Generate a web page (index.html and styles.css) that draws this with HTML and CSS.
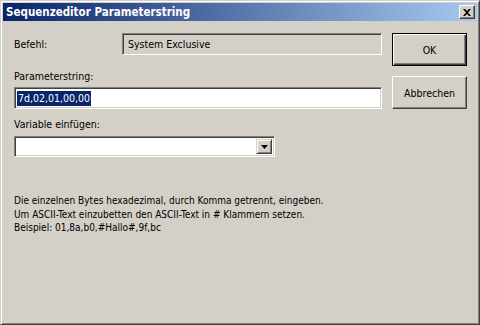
FILE: index.html
```html
<!DOCTYPE html>
<html lang="de">
<head>
    <meta charset="UTF-8">
    <title>Sequenzeditor Parameterstring</title>
    <link rel="stylesheet" href="styles.css">
</head>
<body>
    <div class="window">
        <div class="titlebar">
            <span class="title">Sequenzeditor Parameterstring</span>
            <div class="close">
                <svg width="8" height="7" viewBox="0 0 8 7">
                    <path d="M0 0h2l2 2 2-2h2L5 3.5 8 7H6L4 5 2 7H0l3-3.5z" fill="#000"/>
                </svg>
            </div>
        </div>
        <div class="main">
            <div class="form">
                <div class="row">
                    <span class="label-befehl">Befehl:</span>
                    <div class="field readonly">System Exclusive</div>
                </div>
                <div class="label label-param">Parameterstring:</div>
                <div class="field edit"><span class="selected">7d,02,01,00,00</span></div>
                <div class="label label-var">Variable einfügen:</div>
                <div class="combo">
                    <div class="combo-text"></div>
                    <div class="combo-btn">
                        <svg width="7" height="4" viewBox="0 0 7 4"><path d="M0 0h7L3.5 4z" fill="#000"/></svg>
                    </div>
                </div>
                <div class="help">
                    <div>Die einzelnen Bytes hexadezimal, durch Komma getrennt, eingeben.</div>
                    <div>Um ASCII-Text einzubetten den ASCII-Text in # Klammern setzen.</div>
                    <div>Beispiel: 01,8a,b0,#Hallo#,9f,bc</div>
                </div>
            </div>
            <div class="buttons">
                <div class="btn default">OK</div>
                <div class="btn">Abbrechen</div>
            </div>
        </div>
    </div>
</body>
</html>
```

FILE: styles.css
```css
html, body { margin: 0; padding: 0; }
body { font-family: "DejaVu Sans Condensed", "DejaVu Sans", sans-serif; font-size: 10.5px; color: #000; background: #d4d0c8; }

.window { width: 480px; height: 325px; box-sizing: border-box; background: #d4d0c8; padding: 2px;
  border: 1px solid; border-color: #d4d0c8 #404040 #404040 #d4d0c8;
  box-shadow: inset 1px 1px #fff, inset -1px -1px #808080; }

.titlebar { height: 18px; display: flex; align-items: center; padding-left: 3px; padding-right: 2px;
  background: linear-gradient(to right, #0a246a, #a6caf0); }
.title { color: #fff; font-weight: bold; font-size: 11.5px; }
.close { margin-left: auto; width: 16px; height: 14px; box-sizing: border-box; background: #d4d0c8;
  border: 1px solid; border-color: #fff #404040 #404040 #fff; box-shadow: inset -1px -1px #808080;
  display: flex; align-items: center; justify-content: center; }

.main { display: flex; padding: 12px 0 0 11px; }
.form { width: 368px; }
.buttons { margin-left: 10px; display: flex; flex-direction: column; gap: 10px; }

.row { display: flex; align-items: center; height: 22px; }
.label-befehl { width: 108px; }

.field { box-sizing: border-box; height: 22px; border: 1px solid; border-color: #808080 #fff #fff #808080;
  box-shadow: inset 1px 1px #404040, inset -1px -1px #d4d0c8; display: flex; align-items: center; }
.readonly { flex: 1; padding-left: 5px; background: #d4d0c8; }
.edit { background: #fff; padding-left: 2px; }
.selected { background: #0a246a; color: #fff; line-height: 15px; padding: 0 1px; }

.label { height: 13px; line-height: 13px; }
.label-param { margin-top: 15px; margin-bottom: 4px; }
.label-var { margin-top: 9px; margin-bottom: 5px; }

.combo { width: 261px; height: 21px; box-sizing: border-box; background: #fff; display: flex; padding: 2px;
  border: 1px solid; border-color: #808080 #fff #fff #808080; box-shadow: inset 1px 1px #404040, inset -1px -1px #d4d0c8; }
.combo-text { flex: 1; }
.combo-btn { width: 16px; box-sizing: border-box; background: #d4d0c8; display: flex; align-items: center; justify-content: center;
  border: 1px solid; border-color: #d4d0c8 #404040 #404040 #d4d0c8; box-shadow: inset 1px 1px #fff, inset -1px -1px #808080; }

.help { margin-top: 37px; font-size: 10px; line-height: 13.5px; }

.btn { width: 75px; height: 33px; box-sizing: border-box; display: flex; align-items: center; justify-content: center;
  border: 1px solid; border-color: #fff #404040 #404040 #fff; box-shadow: inset -1px -1px #808080; }
.btn.default { border-color: #000; box-shadow: inset 1px 1px #fff, inset -1px -1px #404040, inset -2px -2px #808080; }
```
